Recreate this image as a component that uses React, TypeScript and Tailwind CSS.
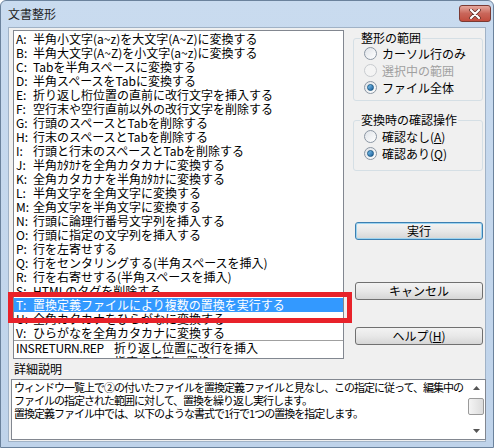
import React from "react";

const font = { fontFamily: '"Noto Sans CJK JP", "Noto Sans", sans-serif' };

const rows = [
  ["A:", "半角小文字(a~z)を大文字(A~Z)に変換する"],
  ["B:", "半角大文字(A~Z)を小文字(a~z)に変換する"],
  ["C:", "Tabを半角スペースに変換する"],
  ["D:", "半角スペースをTabに変換する"],
  ["E:", "折り返し桁位置の直前に改行文字を挿入する"],
  ["F:", "空行末や空行直前以外の改行文字を削除する"],
  ["G:", "行頭のスペースとTabを削除する"],
  ["H:", "行末のスペースとTabを削除する"],
  ["I:", "行頭と行末のスペースとTabを削除する"],
  ["J:", "半角ｶﾀｶﾅを全角カタカナに変換する"],
  ["K:", "全角カタカナを半角ｶﾀｶﾅに変換する"],
  ["L:", "半角文字を全角文字に変換する"],
  ["M:", "全角文字を半角文字に変換する"],
  ["N:", "行頭に論理行番号文字列を挿入する"],
  ["O:", "行頭に指定の文字列を挿入する"],
  ["P:", "行を左寄せする"],
  ["Q:", "行をセンタリングする(半角スペースを挿入)"],
  ["R:", "行を右寄せする(半角スペースを挿入)"],
  ["S:", "HTMLのタグを削除する"],
  ["T:", "置換定義ファイルにより複数の置換を実行する"],
  ["U:", "全角カタカナをひらがなに変換する"],
  ["V:", "ひらがなを全角カタカナに変換する"],
];

const files = [
  ["INSRETURN.REP", "折り返し位置に改行を挿入"],
  ["REFORMWD.REP", "指定文字列の置換"],
];

function Radio({ checked, disabled, children }: { checked?: boolean; disabled?: boolean; children: React.ReactNode }) {
  return (
    <div className="flex h-[17px] items-center pl-[10px]">
      <span
        className={`flex h-[13px] w-[13px] items-center justify-center rounded-full border ${
          disabled ? "border-[#c8cbcf] bg-[#f4f4f4]" : "border-[#8b96a3] bg-gradient-to-br from-[#dfe3e8] to-[#ffffff]"
        }`}
      >
        {checked && <span className="h-[7px] w-[7px] rounded-full border border-[#1b5a86] bg-gradient-to-br from-[#7fc8f4] to-[#1a5d98]" />}
      </span>
      <span className={`ml-[5px] text-[12px] leading-[14px] ${disabled ? "text-[#a0a0a0]" : "text-black"}`}>{children}</span>
    </div>
  );
}

function Btn({ primary, children, className }: { primary?: boolean; children: React.ReactNode; className?: string }) {
  return (
    <div
      className={`ml-[2px] flex h-[18px] w-[128px] items-center justify-center rounded-[3px] border bg-gradient-to-b from-[#f3f3f3] via-[#e8e8e8] to-[#d6d6d6] text-[12px] leading-[14px] text-black ${
        primary ? "border-[#3c7fb1] shadow-[inset_0_0_0_1px_#9ed4f0]" : "border-[#707070]"
      } ${className ?? ""}`}
    >
      {children}
    </div>
  );
}

export default function App() {
  return (
    <div className="h-[448px] w-[496px] overflow-hidden bg-white" style={font}>
      <div className="flex h-[448px] w-[494px] flex-col rounded-t-[6px] border border-[#6b829c] bg-gradient-to-b from-[#c9dbef] to-[#bfd3ea]">
        {/* title bar */}
        <div className="flex h-[26px] shrink-0 items-start justify-between pl-[7px]">
          <span className="mt-[6px] text-[12px] leading-[14px] text-[#1e1e1e]">文書整形</span>
          <div className="mr-[2px] mt-[4px] flex h-[17px] w-[32px] items-center justify-center rounded-[3px] border border-[#7b3a33] bg-gradient-to-b from-[#e5a89e] via-[#c9665a] to-[#c24d3e]">
            <svg width="12" height="10" viewBox="0 0 12 10">
              <path d="M2 1 L10 9 M10 1 L2 9" stroke="#5a2a24" strokeWidth="3.6" strokeLinecap="round" />
              <path d="M2 1 L10 9 M10 1 L2 9" stroke="#ffffff" strokeWidth="2.2" strokeLinecap="round" />
            </svg>
          </div>
        </div>

        {/* client area */}
        <div className="relative mx-[7px] mb-[5px] flex-1 border border-[#a0b2c6] bg-[#f0f0f0]">
          <div className="flex pl-[4px] pt-[2px]">
            {/* list box */}
            <div className="h-[329px] w-[331px] overflow-hidden border border-[#828790] bg-white pt-[1px]">
              {rows.map(([k, t]) => {
                const sel = k === "T:";
                return (
                  <div
                    key={k}
                    className={`flex h-[14px] items-center whitespace-nowrap pl-[2px] text-[12px] leading-[14px] ${
                      sel ? "bg-[#3399ff] text-white" : "text-black"
                    }`}
                  >
                    <span className="inline-block w-[17px] shrink-0">{k}</span>
                    <span>{t}</span>
                  </div>
                );
              })}
              <div className="border-t border-[#a0a0a0]">
                {files.map(([f, t]) => (
                  <div key={f} className="flex h-[14px] items-center whitespace-nowrap pl-[2px] text-[12px] leading-[14px] text-black">
                    <span className="mr-[10px] shrink-0 tracking-[-0.3px]">{f}</span>
                    <span>{t}</span>
                  </div>
                ))}
              </div>
            </div>

            {/* right column */}
            <div className="ml-[9px] flex w-[130px] flex-col">
              <fieldset className="mt-[1px] h-[70px] rounded-[3px] border border-[#d5dfe5]">
                <legend className="ml-[6px] px-[1px] text-[12px] leading-[14px] text-black">整形の範囲</legend>
                <Radio>カーソル行のみ</Radio>
                <Radio disabled>選択中の範囲</Radio>
                <Radio checked>ファイル全体</Radio>
              </fieldset>
              <fieldset className="mt-[12px] h-[58px] rounded-[3px] border border-[#d5dfe5]">
                <legend className="ml-[6px] px-[1px] text-[12px] leading-[14px] text-black">変換時の確認操作</legend>
                <div className="pt-[1px]">
                  <Radio>
                    確認なし(<span className="underline">A</span>)
                  </Radio>
                  <Radio checked>
                    確認あり(<span className="underline">Q</span>)
                  </Radio>
                </div>
              </fieldset>
              <Btn primary className="mt-[51px]">実行</Btn>
              <Btn className="mt-[42px]">キャンセル</Btn>
              <Btn className="mt-[27px]">
                ヘルプ(<span className="underline">H</span>)
              </Btn>
            </div>
          </div>

          {/* detail */}
          <div className="mt-[3px] pl-[5px] text-[12px] leading-[14px] text-black">詳細説明</div>
          <div className="ml-[2px] mt-[3px] flex h-[61px] w-[475px] border border-[#828790] bg-white">
            <div className="flex-1 pl-[2px] pt-[1px] text-[11px] leading-[13px] tracking-[-1px] text-black">
              <div className="whitespace-nowrap">ウィンドウ一覧上で②の付いたファイルを置換定義ファイルと見なし、この指定に従って、編集中の</div>
              <div className="whitespace-nowrap">ファイルの指定された範囲に対して、置換を繰り返し実行します。</div>
              <div className="whitespace-nowrap">置換定義ファイル中では、以下のような書式で1行で1つの置換を指定します。</div>
            </div>
            <div className="mr-[1px] flex w-[16px] flex-col">
              <div className="flex h-[16px] items-center justify-center">
                <svg width="7" height="4" viewBox="0 0 7 4">
                  <path d="M0 4 L3.5 0 L7 4 Z" fill="#555" />
                </svg>
              </div>
              <div className="mt-[2px] h-[17px] w-[16px] rounded-[2px] border border-[#9a9a9a] bg-gradient-to-r from-[#f4f4f4] to-[#dcdcdc]" />
              <div className="flex-1" />
              <div className="flex h-[16px] items-center justify-center">
                <svg width="7" height="4" viewBox="0 0 7 4">
                  <path d="M0 0 L7 0 L3.5 4 Z" fill="#555" />
                </svg>
              </div>
            </div>
          </div>

          {/* annotation frame */}
          <div className="pointer-events-none absolute left-[-1px] top-[264px] h-[31px] w-[344px] border-[5px] border-[#e8222a]" />
        </div>
      </div>
    </div>
  );
}
